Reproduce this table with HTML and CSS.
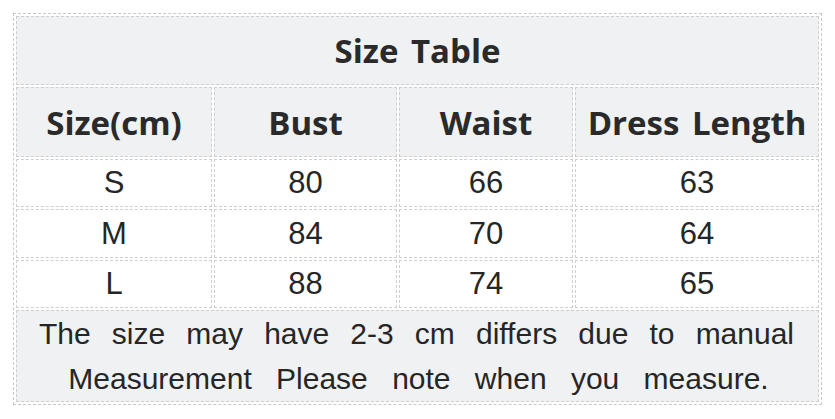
FILE: index.html
```html
<!DOCTYPE html>
<html>
<head>
<meta charset="utf-8">
<link rel="stylesheet" href="styles.css">
</head>
<body>
<table class="size-table">
  <colgroup>
    <col class="c1"><col class="c2"><col class="c3"><col class="c4">
  </colgroup>
  <tr class="title-row"><th colspan="4">Size Table</th></tr>
  <tr class="head-row"><th>Size(cm)</th><th>Bust</th><th>Waist</th><th>Dress Length</th></tr>
  <tr class="data-row"><td>S</td><td>80</td><td>66</td><td>63</td></tr>
  <tr class="data-row mid"><td>M</td><td>84</td><td>70</td><td>64</td></tr>
  <tr class="data-row"><td>L</td><td>88</td><td>74</td><td>65</td></tr>
  <tr class="note-row"><td colspan="4"><p class="note"><span class="line1">The size may have 2-3 cm differs due to manual</span><span class="line2">Measurement Please note when you measure.</span></p></td></tr>
</table>
</body>
</html>
```
FILE: styles.css
```css
html, body {
  margin: 0;
  padding: 0;
  background: #ffffff;
}
body {
  padding: 13px 0 0 13px;
}
.size-table {
  border: 1px dashed #c8c8c8;
  border-collapse: separate;
  border-spacing: 2px;
  table-layout: fixed;
  width: 809px;
  color: #262626;
}
.c1 { width: 196px; }
.c2 { width: 183px; }
.c3 { width: 174px; }
.c4 { width: 244px; }
th, td {
  border: 1px dashed #cfcfcf;
  padding: 0;
  text-align: center;
  vertical-align: middle;
}
th {
  background: #eff1f3;
  font-family: "Open Sans", "Noto Sans", sans-serif;
  font-weight: 700;
  font-size: 33px;
  word-spacing: 4px;
  color: #2a2a2a;
}
.title-row th { height: 67px; }
.head-row th { height: 68px; }
td {
  font-family: "Liberation Sans", Arial, sans-serif;
  font-size: 31px;
  background: #ffffff;
}
.data-row td { height: 46px; }
.data-row.mid td { height: 47px; }
.note-row td {
  background: #eff1f3;
  height: 90px;
  padding: 0 24px 0 22px;
}
.note {
  margin: 0;
  line-height: 45px;
  font-size: 30px;
}
.line1 {
  display: block;
  text-align: justify;
  text-align-last: justify;
}
.line2 {
  display: block;
  text-align: center;
  word-spacing: 16px;
  padding-left: 4px;
}
```
